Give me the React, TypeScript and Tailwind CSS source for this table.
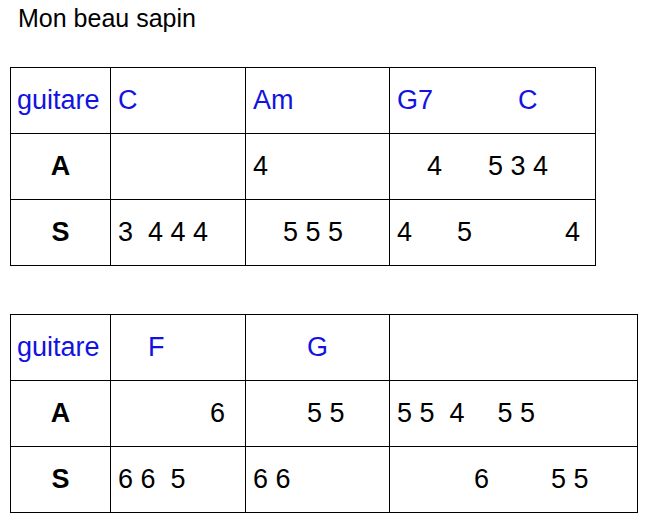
import type { ReactNode } from "react";

/* Grille "Mon beau sapin" : accords guitare + notes A / S */

const FONT = { fontFamily: "'Liberation Sans', Arial, sans-serif" };

function Cell({ children, head }: { children?: ReactNode; head?: boolean }) {
  return (
    <div
      className={
        head
          ? "flex h-[66px] items-center justify-center border-r border-b border-black text-[27px] font-bold text-black"
          : "flex h-[66px] items-center whitespace-pre border-r border-b border-black pl-[7px] text-[27px] text-black"
      }
    >
      {children}
    </div>
  );
}

function Chords({ children }: { children?: ReactNode }) {
  return (
    <div className="flex h-[66px] items-center whitespace-pre border-r border-b border-black pl-[7px] text-[27px] text-[#1212e2]">
      {children}
    </div>
  );
}

function Guitare() {
  return (
    <div className="flex h-[66px] items-center border-r border-b border-black pl-[6px] text-[27px] text-[#1212e2]">
      guitare
    </div>
  );
}

export default function App() {
  return (
    <div className="min-h-[519px] w-[646px] bg-white" style={FONT}>
      <div className="pl-[18px] pt-[4px] text-[25px] leading-[29px] text-black">Mon beau sapin</div>

      <div className="pl-[10px]">
        {/* Table 1 */}
        <div className="mt-[34px] grid w-max grid-cols-[100px_135px_144px_206px] border-l border-t border-black">
          <Guitare />
          <Chords>C</Chords>
          <Chords>Am</Chords>
          <Chords>
            <span>G7</span>
            <span className="ml-[85px]">C</span>
          </Chords>

          <Cell head>A</Cell>
          <Cell />
          <Cell>4</Cell>
          <Cell>
            <span className="ml-[30px]">4</span>
            <span className="ml-[46px]">5 3 4</span>
          </Cell>

          <Cell head>S</Cell>
          <Cell>3  4 4 4</Cell>
          <Cell>
            <span className="ml-[30px]">5 5 5</span>
          </Cell>
          <Cell>
            <span>4</span>
            <span className="ml-[45px]">5</span>
            <span className="ml-[93px]">4</span>
          </Cell>
        </div>

        {/* Table 2 */}
        <div className="mt-[48px] grid w-max grid-cols-[100px_135px_144px_248px] border-l border-t border-black">
          <Guitare />
          <Chords>
            <span className="ml-[30px]">F</span>
          </Chords>
          <Chords>
            <span className="ml-[54px]">G</span>
          </Chords>
          <Chords />

          <Cell head>A</Cell>
          <Cell>
            <span className="ml-[92px]">6</span>
          </Cell>
          <Cell>
            <span className="ml-[54px]">5 5</span>
          </Cell>
          <Cell>
            <span>5 5  4</span>
            <span className="ml-[33px]">5 5</span>
          </Cell>

          <Cell head>S</Cell>
          <Cell>6 6  5</Cell>
          <Cell>6 6</Cell>
          <Cell>
            <span className="ml-[77px]">6</span>
            <span className="ml-[62px]">5 5</span>
          </Cell>
        </div>
      </div>
    </div>
  );
}
